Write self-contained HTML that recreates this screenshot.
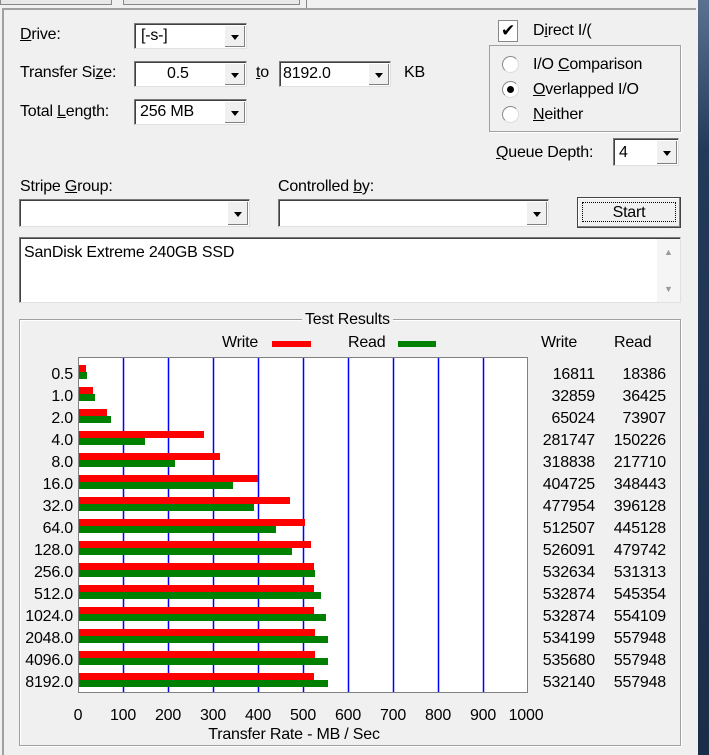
<!DOCTYPE html>
<html style="overflow:hidden"><head><style>
html,body{overflow:hidden}
body{margin:0;width:709px;height:755px;background:#f0f0f0;position:relative;overflow:hidden;font-family:"Liberation Sans",sans-serif;font-size:16px;color:#000;letter-spacing:-0.2px}
.a{position:absolute;white-space:nowrap}
.cb{position:absolute;background:#fff;border:1px solid #7a7a7a;border-right-color:#e0e0e0;border-bottom-color:#e0e0e0;box-shadow:inset 1px 1px 0 #404040;box-sizing:border-box}
.cb .t{position:absolute;left:6px;top:3px}
.cb .btn{position:absolute;right:1px;top:2px;bottom:1px;width:20px;background:#f0f0f0;border-left:1px solid #fff;box-shadow:inset -1px -1px 0 #808080}
.cb .btn:after{content:"";position:absolute;left:6px;top:50%;margin-top:-2px;border-left:4px solid transparent;border-right:4px solid transparent;border-top:5px solid #000}
.rad{position:absolute;width:17px;height:17px;border-radius:50%;background:#fff;border:1px solid #888;border-right-color:#ddd;border-bottom-color:#ddd;box-sizing:border-box}
u{text-decoration:underline}
</style></head><body>
<div class="a" style="left:0;top:0;width:110px;height:4px;border:1px solid #888;border-top:none;background:#e8e8e8"></div>
<div class="a" style="left:123px;top:0;width:175px;height:4px;border:1px solid #888;border-top:none;background:#e8e8e8"></div>
<div class="a" style="left:306px;top:0;width:1px;height:9px;background:#888"></div>
<div class="a" style="left:2px;top:8px;width:694px;height:747px;border-top:2px solid #a0a0a0;border-left:2px solid #a0a0a0;box-sizing:border-box"></div>
<div class="a" style="left:696px;top:0;width:13px;height:755px;background:linear-gradient(#5a7190,#233a58 20%,#1b2e48)"></div>
<div class="a" style="left:696px;top:0;width:2px;height:755px;background:#f0f0f0"></div>

<div class="a" style="left:20px;top:26px"><u>D</u>rive:</div>
<div class="cb" style="left:134px;top:23px;width:113px;height:26px"><span class="t">[-s-]</span><div class="btn"></div></div>
<div class="a" style="left:20px;top:64px">Transfer Si<u>z</u>e:</div>
<div class="cb" style="left:134px;top:61px;width:113px;height:26px"><span class="t" style="left:32px">0.5</span><div class="btn"></div></div>
<div class="a" style="left:256px;top:64px"><u>t</u>o</div>
<div class="cb" style="left:279px;top:61px;width:112px;height:26px"><span class="t" style="left:3px">8192.0</span><div class="btn"></div></div>
<div class="a" style="left:404px;top:64px">KB</div>
<div class="a" style="left:20px;top:103px">Total <u>L</u>ength:</div>
<div class="cb" style="left:134px;top:99px;width:113px;height:26px"><span class="t" style="left:5px">256 MB</span><div class="btn"></div></div>

<div class="a" style="left:498px;top:20px;width:20px;height:22px;background:#fff;border:1px solid #888;box-sizing:border-box;font-size:17px;line-height:20px;text-align:center">✔</div>
<div class="a" style="left:533px;top:22px">D<u>i</u>rect I/(</div>
<div class="a" style="left:489px;top:45px;width:192px;height:87px;border:1px solid #a0a0a0;box-shadow:1px 1px 0 #fff;box-sizing:border-box"></div>
<div class="rad" style="left:502px;top:56px"></div>
<div class="a" style="left:533px;top:56px">I/O <u>C</u>omparison</div>
<div class="rad" style="left:502px;top:81px"><div style="position:absolute;left:4px;top:4px;width:7px;height:7px;border-radius:50%;background:#000"></div></div>
<div class="a" style="left:533px;top:81px"><u>O</u>verlapped I/O</div>
<div class="rad" style="left:502px;top:106px"></div>
<div class="a" style="left:533px;top:106px"><u>N</u>either</div>
<div class="a" style="left:496px;top:144px"><u>Q</u>ueue Depth:</div>
<div class="cb" style="left:613px;top:138px;width:66px;height:28px"><span class="t" style="left:5px;top:5px">4</span><div class="btn"></div></div>

<div class="a" style="left:20px;top:178px">Stripe <u>G</u>roup:</div>
<div class="cb" style="left:19px;top:199px;width:231px;height:28px"><div class="btn"></div></div>
<div class="a" style="left:278px;top:178px">Controlled <u>b</u>y:</div>
<div class="cb" style="left:278px;top:199px;width:271px;height:28px"><div class="btn"></div></div>
<div class="a" style="left:577px;top:197px;width:104px;height:31px;border:1px solid #444;background:#f0f0f0;box-sizing:border-box;box-shadow:inset -1px -1px 0 #808080,inset 1px 1px 0 #fff">
 <div style="position:absolute;left:4px;top:4px;right:4px;bottom:5px;border:1px dotted #000;text-align:center;line-height:19px">Start</div></div>

<div class="cb" style="left:19px;top:237px;width:662px;height:66px"><span class="t" style="left:4px;top:6px">SanDisk Extreme 240GB SSD</span>
<div style="position:absolute;right:0;top:1px;bottom:0;width:23px;background:#f5f5f5"><span style="position:absolute;left:7px;top:8px;font-size:9px;color:#999">▲</span><span style="position:absolute;left:7px;bottom:8px;font-size:9px;color:#999">▼</span></div></div>

<div class="a" style="left:19px;top:319px;width:662px;height:427px;border:1px solid #a0a0a0;box-shadow:inset 1px 1px 0 #fff,1px 1px 0 #fff;box-sizing:border-box"></div>
<div class="a" style="left:302px;top:311px;background:#f0f0f0;padding:0 3px">Test Results</div>
<div class="a" style="left:222px;top:334px">Write</div>
<div class="a" style="left:272px;top:341px;width:39px;height:6px;background:#f00"></div>
<div class="a" style="left:348px;top:334px">Read</div>
<div class="a" style="left:398px;top:341px;width:38px;height:6px;background:#008000"></div>
<div class="a" style="left:541px;top:334px">Write</div>
<div class="a" style="left:614px;top:334px">Read</div>

<svg class="a" style="left:0;top:0" width="709" height="755" font-family="Liberation Sans,sans-serif" font-size="16" letter-spacing="-0.2">
<rect x="78.5" y="357.5" width="449" height="335" fill="#fff" stroke="#808080"/>
<g stroke="#0000ff" stroke-width="1.5">
<line x1="123.5" y1="358" x2="123.5" y2="692"/><line x1="168.5" y1="358" x2="168.5" y2="692"/><line x1="213.5" y1="358" x2="213.5" y2="692"/><line x1="258.5" y1="358" x2="258.5" y2="692"/><line x1="303.5" y1="358" x2="303.5" y2="692"/><line x1="348.5" y1="358" x2="348.5" y2="692"/><line x1="393.5" y1="358" x2="393.5" y2="692"/><line x1="438.5" y1="358" x2="438.5" y2="692"/><line x1="483.5" y1="358" x2="483.5" y2="692"/>
</g>
<g fill="#f00">
<rect x="79" y="365" width="7" height="7"/><rect x="79" y="387" width="14" height="7"/><rect x="79" y="409" width="28" height="7"/><rect x="79" y="431" width="125" height="7"/><rect x="79" y="453" width="141" height="7"/><rect x="79" y="475" width="179" height="7"/><rect x="79" y="497" width="211" height="7"/><rect x="79" y="519" width="226" height="7"/><rect x="79" y="541" width="232" height="7"/><rect x="79" y="563" width="235" height="7"/><rect x="79" y="585" width="235" height="7"/><rect x="79" y="607" width="235" height="7"/><rect x="79" y="629" width="236" height="7"/><rect x="79" y="651" width="236" height="7"/><rect x="79" y="673" width="235" height="7"/>
</g>
<g fill="#008000">
<rect x="79" y="372" width="8" height="7"/><rect x="79" y="394" width="16" height="7"/><rect x="79" y="416" width="32" height="7"/><rect x="79" y="438" width="66" height="7"/><rect x="79" y="460" width="96" height="7"/><rect x="79" y="482" width="154" height="7"/><rect x="79" y="504" width="175" height="7"/><rect x="79" y="526" width="197" height="7"/><rect x="79" y="548" width="213" height="7"/><rect x="79" y="570" width="236" height="7"/><rect x="79" y="592" width="242" height="7"/><rect x="79" y="614" width="247" height="7"/><rect x="79" y="636" width="249" height="7"/><rect x="79" y="658" width="249" height="7"/><rect x="79" y="680" width="249" height="7"/>
</g>
<g text-anchor="end">
<text x="73" y="379">0.5</text><text x="73" y="401">1.0</text><text x="73" y="423">2.0</text><text x="73" y="445">4.0</text><text x="73" y="467">8.0</text><text x="73" y="489">16.0</text><text x="73" y="511">32.0</text><text x="73" y="533">64.0</text><text x="73" y="555">128.0</text><text x="73" y="577">256.0</text><text x="73" y="599">512.0</text><text x="73" y="621">1024.0</text><text x="73" y="643">2048.0</text><text x="73" y="665">4096.0</text><text x="73" y="687">8192.0</text>
</g>
<g text-anchor="end">
<text x="595" y="379">16811</text><text x="595" y="401">32859</text><text x="595" y="423">65024</text><text x="595" y="445">281747</text><text x="595" y="467">318838</text><text x="595" y="489">404725</text><text x="595" y="511">477954</text><text x="595" y="533">512507</text><text x="595" y="555">526091</text><text x="595" y="577">532634</text><text x="595" y="599">532874</text><text x="595" y="621">532874</text><text x="595" y="643">534199</text><text x="595" y="665">535680</text><text x="595" y="687">532140</text>
<text x="666" y="379">18386</text><text x="666" y="401">36425</text><text x="666" y="423">73907</text><text x="666" y="445">150226</text><text x="666" y="467">217710</text><text x="666" y="489">348443</text><text x="666" y="511">396128</text><text x="666" y="533">445128</text><text x="666" y="555">479742</text><text x="666" y="577">531313</text><text x="666" y="599">545354</text><text x="666" y="621">554109</text><text x="666" y="643">557948</text><text x="666" y="665">557948</text><text x="666" y="687">557948</text>
</g>
<g text-anchor="middle">
<text x="78" y="720">0</text><text x="123" y="720">100</text><text x="168" y="720">200</text><text x="213" y="720">300</text><text x="258" y="720">400</text><text x="303" y="720">500</text><text x="348" y="720">600</text><text x="393" y="720">700</text><text x="438" y="720">800</text><text x="483" y="720">900</text><text x="526" y="720">1000</text>
<text x="294" y="739">Transfer Rate - MB / Sec</text>
</g>
</svg>
</body></html>
